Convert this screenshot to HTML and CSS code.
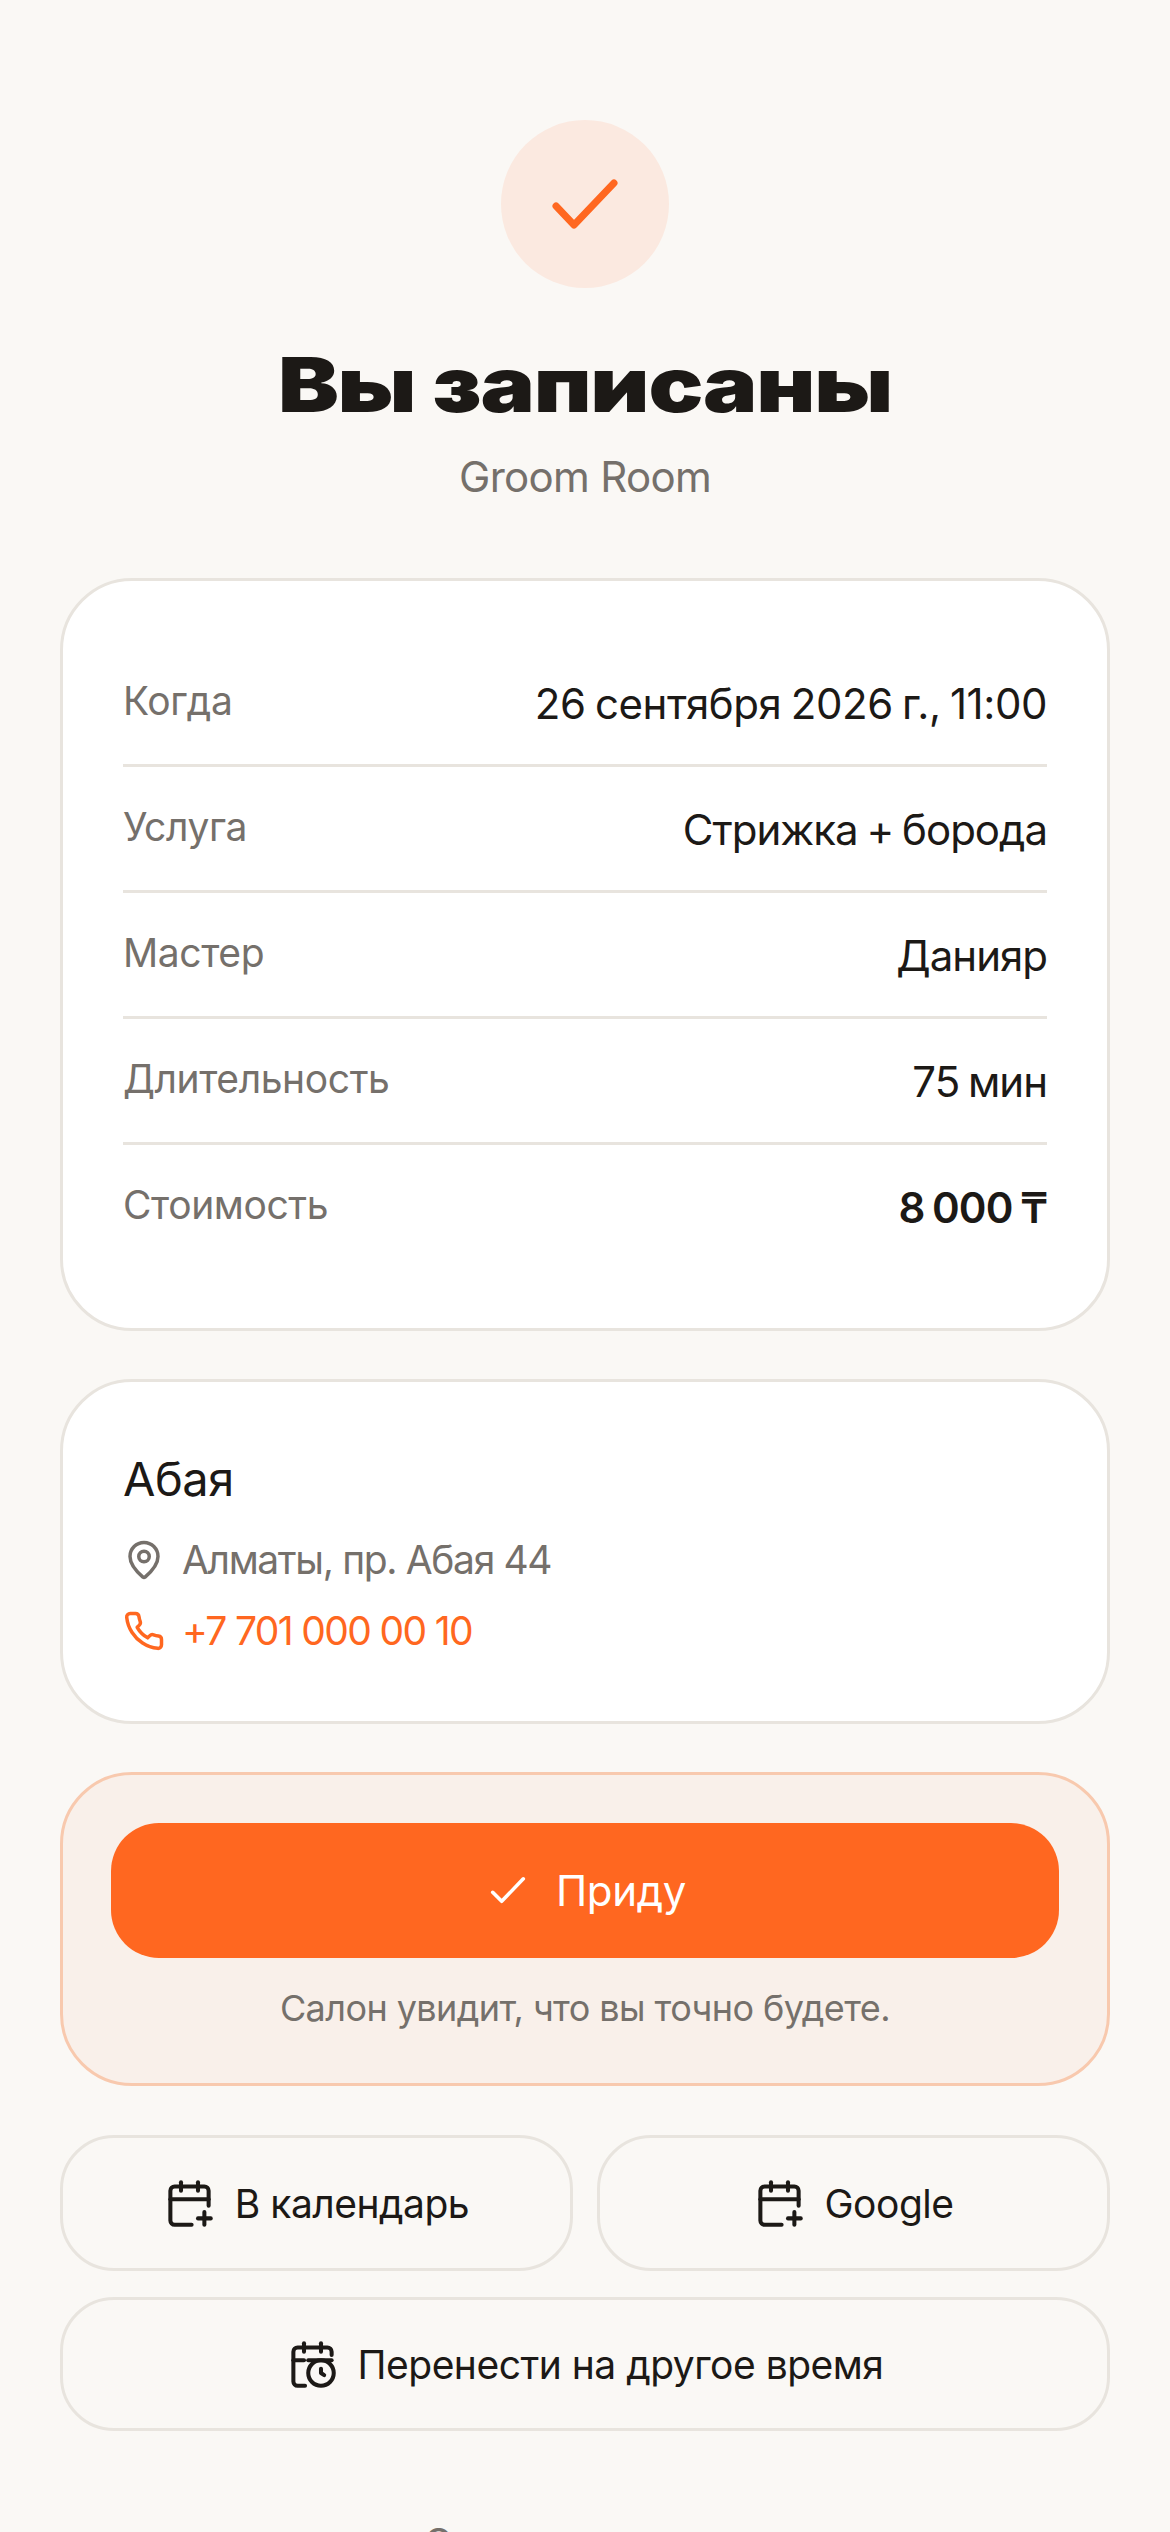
FILE: index.html
```html
<!DOCTYPE html>
<html lang="ru">
<head>
    <meta charset="UTF-8">
    <meta name="viewport" content="width=device-width, initial-scale=1.0">
    <title>Вы записаны - Groom Room</title>
    <link rel="stylesheet" href="styles.css">
</head>
<body>

    <header class="hero">
        <div class="hero-circle">
            <svg class="hero-check" viewBox="0 0 70 54"><polyline points="6,29 24,48 64,6"/></svg>
        </div>
        <h1>Вы записаны</h1>
        <p class="hero-sub">Groom Room</p>
    </header>

    <section class="card details">
        <div class="row"><span class="row-label">Когда</span><span class="row-value date">26 сентября 2026 г., 11:00</span></div>
        <div class="row"><span class="row-label">Услуга</span><span class="row-value">Стрижка + борода</span></div>
        <div class="row"><span class="row-label">Мастер</span><span class="row-value">Данияр</span></div>
        <div class="row"><span class="row-label">Длительность</span><span class="row-value">75 мин</span></div>
        <div class="row"><span class="row-label">Стоимость</span><span class="row-value price">8 000 ₸</span></div>
    </section>

    <section class="card place">
        <h2>Абая</h2>
        <div class="place-line">
            <svg class="icon" viewBox="0 0 24 24"><path d="M20 10c0 4.99-5.54 10.19-7.4 11.8a1 1 0 0 1-1.2 0C9.54 20.19 4 14.99 4 10a8 8 0 0 1 16 0"/><circle cx="12" cy="10" r="3"/></svg>
            <span>Алматы, пр. Абая 44</span>
        </div>
        <div class="place-line phone">
            <svg class="icon" viewBox="0 0 24 24"><path d="M22 16.92v3a2 2 0 0 1-2.18 2 19.79 19.79 0 0 1-8.63-3.07 19.5 19.5 0 0 1-6-6 19.79 19.79 0 0 1-3.07-8.67A2 2 0 0 1 4.11 2h3a2 2 0 0 1 2 1.72c.13.96.36 1.9.7 2.81a2 2 0 0 1-.45 2.11L8.09 9.91a16 16 0 0 0 6 6l1.27-1.27a2 2 0 0 1 2.11-.45c.91.34 1.85.57 2.81.7A2 2 0 0 1 22 16.92z"/></svg>
            <span>+7 701 000 00 10</span>
        </div>
    </section>

    <section class="card confirm">
        <button class="btn-main" type="button">
            <svg class="btn-check" viewBox="0 0 40 32"><polyline points="3,18 13,28 37,3"/></svg>
            Приду
        </button>
        <p class="confirm-note">Салон увидит, что вы точно будете.</p>
    </section>

    <div class="actions">
        <button class="btn-line" type="button">
            <svg class="icon" viewBox="0 0 24 24"><path d="M21 13V6a2 2 0 0 0-2-2H5a2 2 0 0 0-2 2v14a2 2 0 0 0 2 2h8"/><path d="M3 10h18"/><path d="M8 2v4"/><path d="M16 2v4"/><path d="M16 19h6"/><path d="M19 16v6"/></svg>
            В календарь
        </button>
        <button class="btn-line" type="button">
            <svg class="icon" viewBox="0 0 24 24"><path d="M21 13V6a2 2 0 0 0-2-2H5a2 2 0 0 0-2 2v14a2 2 0 0 0 2 2h8"/><path d="M3 10h18"/><path d="M8 2v4"/><path d="M16 2v4"/><path d="M16 19h6"/><path d="M19 16v6"/></svg>
            Google
        </button>
        <button class="btn-line wide" type="button">
            <svg class="icon" viewBox="0 0 24 24"><path d="M21 7.5V6a2 2 0 0 0-2-2H5a2 2 0 0 0-2 2v14a2 2 0 0 0 2 2h3.5"/><path d="M3 10h5"/><path d="M8 2v4"/><path d="M16 2v4"/><path d="M10 10h11"/><circle cx="16" cy="16" r="6"/><path d="M16 14v2l1.5 1"/></svg>
            Перенести на другое время
        </button>
    </div>

    <a class="cancel" href="#">Отменить запись</a>

</body>
</html>
```

FILE: styles.css
```css
html {
    height: 2532px;
    overflow: hidden;
}
body {
    font-family: Inter, "Noto Sans", sans-serif;
    background-color: #faf8f5;
    color: #1c1916;
    margin: 0;
    padding: 120px 60px 0;
}
.hero {
    text-align: center;
    margin-bottom: 74px;
}
.hero-circle {
    width: 168px;
    height: 168px;
    margin: 0 auto;
    border-radius: 50%;
    background-color: #fbe9e0;
    display: flex;
    align-items: center;
    justify-content: center;
}
.hero-check {
    width: 70px;
    height: 54px;
    fill: none;
    stroke: #ff6720;
    stroke-width: 7;
    stroke-linecap: round;
    stroke-linejoin: round;
}
h1 {
    font-size: 76px;
    font-weight: 900;
    line-height: 96px;
    margin: 48px 0 0;
    letter-spacing: -1px;
    transform: scaleX(1.2);
}
.hero-sub {
    font-size: 42px;
    line-height: 54px;
    color: #75706b;
    margin: 18px 0 0;
    letter-spacing: -0.7px;
}
.card {
    background-color: #fff;
    border: 3px solid #e8e4de;
    border-radius: 72px;
    padding: 60px;
    margin-bottom: 48px;
}
.row {
    display: flex;
    justify-content: space-between;
    padding: 36px 0 33px;
    border-bottom: 3px solid #e8e4de;
}
.row:last-child {
    border-bottom: 0;
}
.row-label {
    font-size: 39px;
    line-height: 48px;
    color: #75706b;
    letter-spacing: -0.4px;
}
.row-value {
    font-size: 42px;
    line-height: 54px;
    letter-spacing: -1px;
    word-spacing: -2px;
}
.date {
    letter-spacing: -0.45px;
}
.price {
    font-weight: 600;
    letter-spacing: -0.9px;
}
.place h2 {
    font-size: 47px;
    font-weight: 400;
    line-height: 74px;
    margin: 0 0 14px;
    letter-spacing: -0.5px;
}
.place-line {
    display: flex;
    align-items: center;
    gap: 17px;
    font-size: 39px;
    line-height: 60px;
    color: #75706b;
    margin-top: 11px;
    letter-spacing: -1.35px;
}
.phone {
    color: #ff6720;
    letter-spacing: -1.65px;
}
.icon {
    width: 42px;
    height: 42px;
    flex: none;
    fill: none;
    stroke: currentColor;
    stroke-width: 2;
    stroke-linecap: round;
    stroke-linejoin: round;
}
.confirm {
    background-color: #f9f0ea;
    border-color: #f8c9ae;
    padding: 48px;
    margin-bottom: 49px;
}
.btn-main {
    display: flex;
    align-items: center;
    justify-content: center;
    gap: 30px;
    width: 100%;
    height: 135px;
    padding: 0 0 0 6px;
    background-color: #ff6720;
    color: #fff;
    border: 0;
    border-radius: 48px;
    font-family: inherit;
    font-size: 42px;
    font-weight: 400;
    letter-spacing: -0.3px;
}
.btn-check {
    width: 36px;
    height: 29px;
    fill: none;
    stroke: #fff;
    stroke-width: 4;
    stroke-linecap: round;
    stroke-linejoin: round;
}
.confirm-note {
    font-size: 36px;
    line-height: 54px;
    color: #75706b;
    text-align: center;
    margin: 23px 0 0;
    letter-spacing: -0.57px;
}
.actions {
    display: grid;
    grid-template-columns: 1fr 1fr;
    gap: 26px 24px;
}
.btn-line {
    display: flex;
    align-items: center;
    justify-content: center;
    gap: 20px;
    height: 136px;
    background-color: transparent;
    color: #1c1916;
    border: 3px solid #e8e4de;
    border-radius: 54px;
    font-family: inherit;
    font-size: 39px;
    font-weight: 400;
    letter-spacing: -0.5px;
}
.btn-line .icon {
    width: 51px;
    height: 51px;
    stroke-width: 1.9;
}
.wide {
    grid-column: 1 / 3;
    height: 134px;
}
.cancel {
    display: block;
    text-align: center;
    font-size: 39px;
    line-height: 48px;
    color: #75706b;
    text-decoration: none;
    margin-top: 88px;
    letter-spacing: -0.5px;
}
```
